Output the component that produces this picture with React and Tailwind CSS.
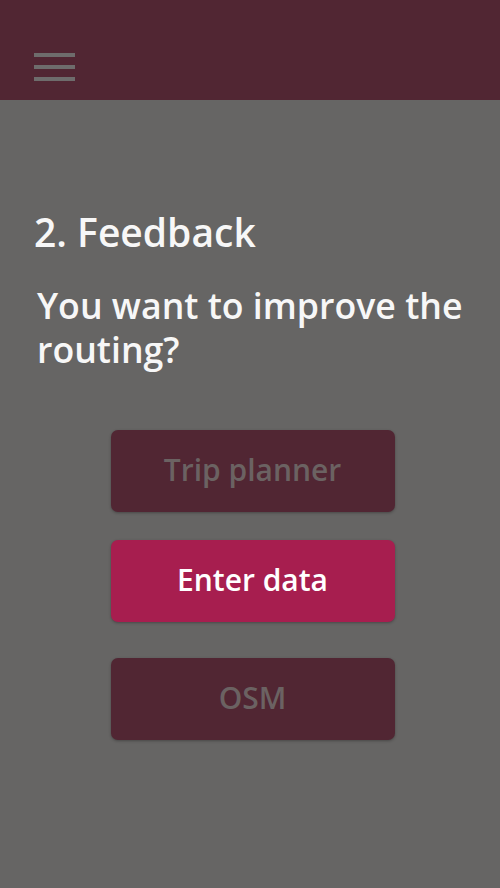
export default function App() {
  const font = { fontFamily: '"Open Sans", "Noto Sans", sans-serif' };
  return (
    <div className="w-[500px] h-[888px] bg-[#666564] flex flex-col" style={font}>
      <header className="h-[100px] bg-[#512633] flex px-[34px] pt-[53px] shrink-0">
        <div className="flex flex-col gap-[8px]">
          <div className="w-[41px] h-[4px] bg-[#6e6c6c]" />
          <div className="w-[41px] h-[4px] bg-[#6e6c6c]" />
          <div className="w-[41px] h-[4px] bg-[#6e6c6c]" />
        </div>
      </header>
      <main className="flex flex-col pl-[34px] pr-[20px] pt-[107px]">
        <h1 className="text-[39px] leading-[50px] font-semibold text-[#f7f7f7]">2. Feedback</h1>
        <p className="mt-[26px] text-[35.7px] leading-[44px] font-semibold text-[#f7f7f7] pl-[3px]">
          You want to improve the routing?
        </p>
      </main>
      <div className="mt-[59px] flex flex-col items-center gap-[28px] pl-[5px]">
        <button className="w-[284px] h-[82px] pb-[4px] rounded-[7px] bg-[#512633] text-[#6b6262] text-[30px] font-semibold shadow-[0_1px_3px_rgba(0,0,0,0.3)]">
          Trip planner
        </button>
        <button className="w-[284px] h-[82px] pb-[4px] rounded-[7px] bg-[#a71e4f] text-white text-[30px] font-semibold shadow-[0_1px_3px_rgba(0,0,0,0.3)]">
          Enter data
        </button>
        <button className="w-[284px] h-[82px] pb-[4px] mt-[8px] rounded-[7px] bg-[#512633] text-[#6b6262] text-[30px] font-semibold shadow-[0_1px_3px_rgba(0,0,0,0.3)]">
          OSM
        </button>
      </div>
    </div>
  );
}
